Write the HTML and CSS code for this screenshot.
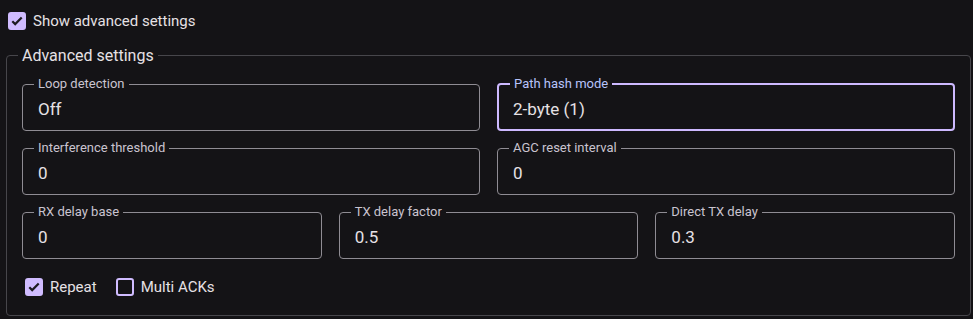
FILE: index.html
```html
<!DOCTYPE html>
<html>

<head>
    <meta charset="UTF-8">
    <title>Advanced settings</title>
    <link rel="stylesheet" href="styles.css">
</head>

<body>

    <label class="check top-check">
        <span class="box checked">
            <svg viewBox="0 0 14 14"><path d="M2.3 7.2l2.9 2.9 6.5-6.6"/></svg>
        </span>
        <span>Show advanced settings</span>
    </label>

    <fieldset class="panel">
        <legend>Advanced settings</legend>

        <div class="row two">
            <fieldset class="field">
                <legend>Loop detection</legend>
                <div class="value">Off</div>
            </fieldset>
            <fieldset class="field focused">
                <legend>Path hash mode</legend>
                <div class="value">2-byte (1)</div>
            </fieldset>
        </div>

        <div class="row two">
            <fieldset class="field">
                <legend>Interference threshold</legend>
                <div class="value">0</div>
            </fieldset>
            <fieldset class="field">
                <legend>AGC reset interval</legend>
                <div class="value">0</div>
            </fieldset>
        </div>

        <div class="row three">
            <fieldset class="field">
                <legend>RX delay base</legend>
                <div class="value">0</div>
            </fieldset>
            <fieldset class="field">
                <legend>TX delay factor</legend>
                <div class="value">0.5</div>
            </fieldset>
            <fieldset class="field">
                <legend>Direct TX delay</legend>
                <div class="value">0.3</div>
            </fieldset>
        </div>

        <div class="checks">
            <label class="check">
                <span class="box checked">
                    <svg viewBox="0 0 14 14"><path d="M2.3 7.2l2.9 2.9 6.5-6.6"/></svg>
                </span>
                <span>Repeat</span>
            </label>
            <label class="check">
                <span class="box"></span>
                <span>Multi ACKs</span>
            </label>
        </div>
    </fieldset>

</body>

</html>
```

FILE: styles.css
```css
* {
    box-sizing: border-box;
}

body {
    margin: 0;
    padding: 11px 2px 0 6px;
    background: #141316;
    color: #e6e1e5;
    font-family: Roboto, "Liberation Sans", sans-serif;
    font-size: 15px;
}

/* Checkboxes */
.check {
    display: flex;
    align-items: center;
    gap: 7px;
    cursor: pointer;
}

.top-check {
    margin-left: 2px;
    height: 19px;
}

.box {
    width: 18px;
    height: 18px;
    border: 2px solid #d0bcff;
    border-radius: 3px;
    display: flex;
    align-items: center;
    justify-content: center;
    flex-shrink: 0;
}

.box.checked {
    background: #d0bcff;
}

.box svg {
    width: 14px;
    height: 14px;
    fill: none;
    stroke: #1d1b20;
    stroke-width: 2.2;
}

/* Outer panel */
.panel {
    margin: 16px 0 0 0;
    padding: 12px 15px 19px 15px;
    border: 1px solid #47464b;
    border-radius: 4px;
}

.panel > legend {
    margin-left: -4px;
    padding: 0 4px;
    font-size: 16px;
}

.row {
    display: grid;
    column-gap: 17px;
    margin-bottom: 10px;
}

.row.two {
    grid-template-columns: 1fr 1fr;
}

.row.three {
    grid-template-columns: 1fr 1fr 1fr;
}

/* Outlined text fields */
.field {
    margin: 0;
    min-width: 0;
    padding: 0 15px 3px 15px;
    border: 1px solid #8f8c93;
    border-radius: 4px;
}

.field legend {
    margin-left: -4px;
    padding: 0 4px;
    font-size: 13px;
    line-height: 14px;
    color: #cac4d0;
}

.field.focused {
    border: 2px solid #cdb9ff;
    padding: 0 14px 2px 14px;
}

.field.focused legend {
    margin-left: -3px;
    color: #b7c3fb;
}

.value {
    height: 36px;
    display: flex;
    align-items: center;
    font-size: 17px;
}

.checks {
    display: flex;
    gap: 19px;
    margin: 19px 0 0 3px;
}
```
